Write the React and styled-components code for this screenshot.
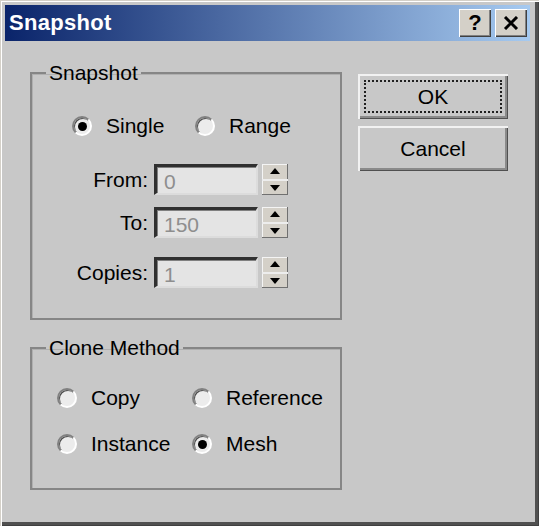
import React from 'react';
import styled, { createGlobalStyle } from 'styled-components';

const GlobalStyle = createGlobalStyle`
  html, body {
    margin: 0;
    padding: 0;
    background: #c8c8c8;
  }
  * {
    box-sizing: border-box;
  }
`;

function App() {
  return (
    <>
      <GlobalStyle />
      <Window>
        <TitleBar>
          <TitleText>Snapshot</TitleText>
          <TitleButtons>
            <CaptionButton>
              <HelpGlyph>?</HelpGlyph>
            </CaptionButton>
            <CaptionButton>
              <svg width="16" height="14" viewBox="0 0 16 14">
                <path d="M2 1 L14 13 M14 1 L2 13" stroke="#000" strokeWidth="3" />
              </svg>
            </CaptionButton>
          </TitleButtons>
        </TitleBar>

        <Client>
          <LeftColumn>
            {/* 스냅샷 그룹 */}
            <GroupBox $padTop={29} $padBottom={30}>
              <Legend>Snapshot</Legend>
              <RadioRow $indent={40} $colWidth={123}>
                <RadioItem>
                  <RadioCircle $checked />
                  <span>Single</span>
                </RadioItem>
                <RadioItem>
                  <RadioCircle />
                  <span>Range</span>
                </RadioItem>
              </RadioRow>

              <SpinGrid>
                <SpinLabel>From:</SpinLabel>
                <SpinInput>0</SpinInput>
                <Spinner />

                <SpinLabel>To:</SpinLabel>
                <SpinInput>150</SpinInput>
                <Spinner />

                <SpinLabel $extra>Copies:</SpinLabel>
                <SpinInput $extra>1</SpinInput>
                <Spinner $extra />
              </SpinGrid>
            </GroupBox>

            {/* 복제 방식 */}
            <GroupBox $padTop={26} $padBottom={32}>
              <Legend>Clone Method</Legend>
              <RadioGrid>
                <RadioItem>
                  <RadioCircle />
                  <span>Copy</span>
                </RadioItem>
                <RadioItem>
                  <RadioCircle />
                  <span>Reference</span>
                </RadioItem>
                <RadioItem>
                  <RadioCircle />
                  <span>Instance</span>
                </RadioItem>
                <RadioItem>
                  <RadioCircle $checked />
                  <span>Mesh</span>
                </RadioItem>
              </RadioGrid>
            </GroupBox>
          </LeftColumn>

          <ButtonColumn>
            <PushButton>
              <FocusRect>OK</FocusRect>
            </PushButton>
            <PushButton>Cancel</PushButton>
          </ButtonColumn>
        </Client>
      </Window>
    </>
  );
}

function Spinner({ $extra }) {
  return (
    <SpinBox $extra={$extra}>
      <SpinHalf>
        <svg width="10" height="6" viewBox="0 0 10 6">
          <path d="M5 0 L10 6 L0 6 Z" fill="#000" />
        </svg>
      </SpinHalf>
      <SpinHalf>
        <svg width="10" height="6" viewBox="0 0 10 6">
          <path d="M0 0 L10 0 L5 6 Z" fill="#000" />
        </svg>
      </SpinHalf>
    </SpinBox>
  );
}

export default App;

const Window = styled.div`
  width: 539px;
  height: 526px;
  padding: 5px 9px 5px 5px;
  background: #c8c8c8;
  font-family: 'Liberation Sans', Arial, sans-serif;
  font-size: 21px;
  color: #000;
  box-shadow: inset 1px 1px 0 #d4d0c8, inset 2px 2px 0 #fff, inset -1px -1px 0 #404040,
    inset -4px -4px 0 #505050;
  overflow: hidden;
`;

const TitleBar = styled.div`
  height: 36px;
  display: flex;
  align-items: center;
  justify-content: space-between;
  padding: 0 3px 0 4px;
  background: linear-gradient(to right, #0a246a, #a6caf0);
`;

const TitleText = styled.div`
  color: #fff;
  font-weight: bold;
  font-size: 22px;
  letter-spacing: 0.3px;
`;

const TitleButtons = styled.div`
  display: flex;
  gap: 4px;
`;

const CaptionButton = styled.div`
  width: 32px;
  height: 28px;
  display: flex;
  align-items: center;
  justify-content: center;
  background: #d4d0c8;
  box-shadow: inset 1px 1px 0 #fff, inset -1px -1px 0 #404040, inset -2px -2px 0 #808080;
`;

const HelpGlyph = styled.span`
  font-weight: bold;
  font-size: 22px;
  line-height: 1;
`;

const Client = styled.div`
  display: flex;
  padding: 20px 0 0 25px;
  gap: 16px;
`;

const LeftColumn = styled.div`
  display: flex;
  flex-direction: column;
  gap: 16px;
  width: 312px;
`;

const GroupBox = styled.fieldset`
  margin: 0;
  padding: ${p => p.$padTop}px 0 ${p => p.$padBottom}px 0;
  border: 2px solid #868686;
  box-shadow: inset 1px 1px 0 #b0b0b0;
`;

const Legend = styled.legend`
  margin-left: 14px;
  padding: 0 3px;
  line-height: 24px;
`;

const RadioRow = styled.div`
  display: grid;
  grid-template-columns: ${p => p.$colWidth}px auto;
  padding-left: ${p => p.$indent}px;
`;

const RadioGrid = styled.div`
  display: grid;
  grid-template-columns: 135px auto;
  row-gap: 22px;
  padding-left: 25px;
`;

const RadioItem = styled.label`
  display: flex;
  align-items: center;
  gap: 14px;
  height: 24px;
`;

const RadioCircle = styled.span`
  position: relative;
  width: 20px;
  height: 20px;
  flex: none;
  border-radius: 50%;
  background: #ececec;
  border: 2px solid;
  border-color: #808080 #ffffff #ffffff #808080;
  box-shadow: inset 1px 1px 0 #505050;

  &::after {
    content: '';
    display: ${p => (p.$checked ? 'block' : 'none')};
    position: absolute;
    left: 4px;
    top: 4px;
    width: 9px;
    height: 9px;
    border-radius: 50%;
    background: #000;
  }
`;

const SpinGrid = styled.div`
  display: grid;
  grid-template-columns: 80px 104px 24px;
  column-gap: 6px;
  row-gap: 12px;
  padding-left: 36px;
  margin-top: 26px;
  align-items: center;

  & > *:nth-child(3n) {
    margin-left: -2px;
  }
`;

const SpinLabel = styled.div`
  text-align: right;
  margin-top: ${p => (p.$extra ? 7 : 0)}px;
`;

const SpinInput = styled.div`
  height: 31px;
  margin-top: ${p => (p.$extra ? 7 : 0)}px;
  padding: 2px 0 0 7px;
  background: #e4e4e4;
  color: #8e8e8e;
  line-height: 25px;
  border-style: solid;
  border-width: 3px 2px 2px 3px;
  border-color: #303030 #dcdcdc #dcdcdc #303030;
  box-shadow: inset 1px 1px 0 #808080;
`;

const SpinBox = styled.div`
  height: 31px;
  margin-top: ${p => (p.$extra ? 7 : 0)}px;
  display: flex;
  flex-direction: column;
  background: #d4d0c8;
  box-shadow: inset -1px -1px 0 #707070, inset 1px 1px 0 #f4f4f4;
`;

const SpinHalf = styled.div`
  flex: 1;
  display: flex;
  align-items: center;
  justify-content: center;

  & + & {
    border-top: 2px solid #ededed;
  }
`;

const ButtonColumn = styled.div`
  display: flex;
  flex-direction: column;
  gap: 7px;
  padding-top: 13px;
  width: 150px;
`;

const PushButton = styled.div`
  height: 45px;
  display: flex;
  align-items: center;
  justify-content: center;
  padding: 6px;
  background: #c8c8c8;
  box-shadow: inset 2px 2px 0 #f2f2f2, inset -1px -1px 0 #505050, inset -3px -3px 0 #8a8a8a;
`;

const FocusRect = styled.div`
  width: 100%;
  height: 100%;
  display: flex;
  align-items: center;
  justify-content: center;
  border: 2px dotted #202020;
`;
